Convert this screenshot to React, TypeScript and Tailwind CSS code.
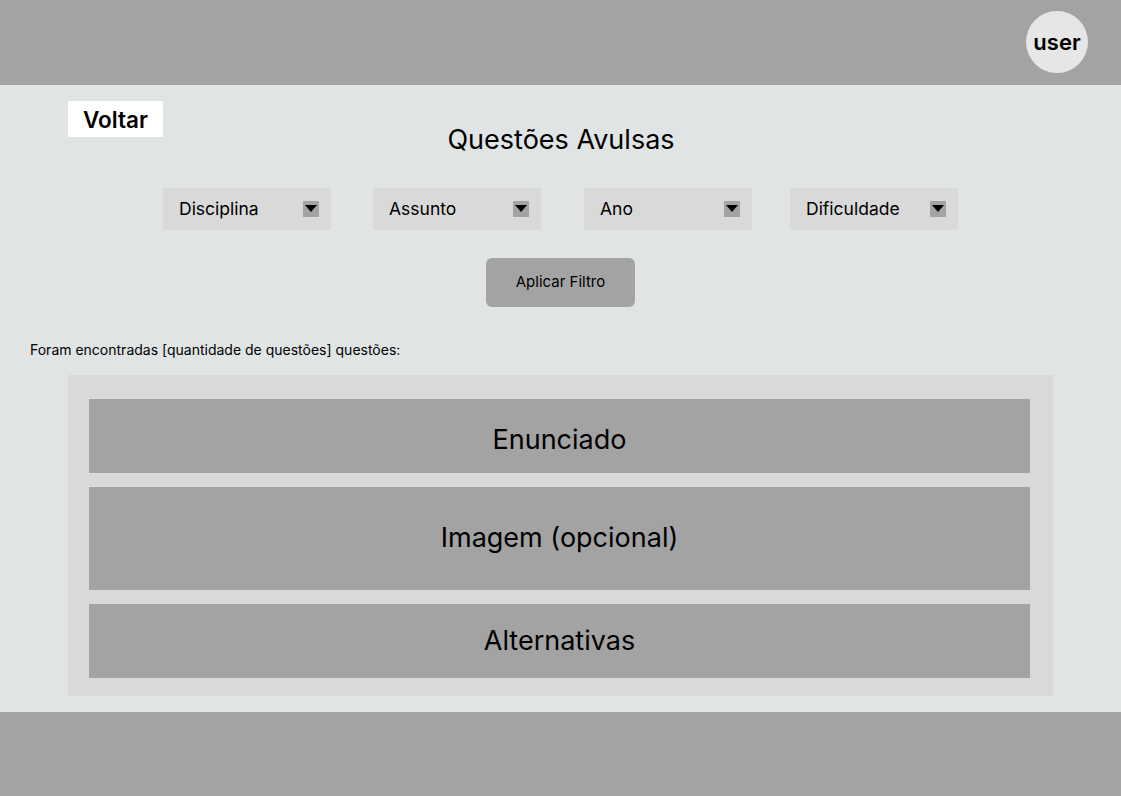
import React from "react";

const font = { fontFamily: "Inter, 'Noto Sans', sans-serif" };

function Select({ label, className = "" }: { label: string; className?: string }) {
  return (
    <div className={`flex h-[42px] w-[168px] items-center justify-between bg-[#d9d9d9] pl-4 pr-[12px] ${className}`}>
      <span className="text-[17.5px] text-black">{label}</span>
      <span className="flex h-4 w-4 items-center justify-center bg-[#a3a3a3]">
        <svg width="12" height="8" viewBox="0 0 12 8">
          <polygon points="0,0 12,0 6,7" fill="#000" />
        </svg>
      </span>
    </div>
  );
}

export default function App() {
  return (
    <div className="flex h-[796px] w-[1121px] flex-col bg-[#e1e4e5]" style={font}>
      <header className="flex h-[85px] shrink-0 items-start justify-end bg-[#a3a3a3] pr-[33px] pt-[11px]">
        <div className="flex h-[62px] w-[62px] items-center justify-center rounded-full bg-[#e6e6e6] text-[22px] font-semibold text-black">
          user
        </div>
      </header>
      <main className="relative flex flex-1 flex-col">
        <div className="ml-[68px] mt-4 flex h-9 w-[95px] items-center justify-center bg-white pt-[2px] text-[22.5px] font-semibold text-black">
          Voltar
        </div>
        <h1 className="-mt-[13px] pl-[1px] text-center text-[27px] leading-[32px] text-black">Questões Avulsas</h1>
        <div className="mt-[32px] flex pl-[163px]">
          <Select label="Disciplina" />
          <Select label="Assunto" className="ml-[42px]" />
          <Select label="Ano" className="ml-[43px]" />
          <Select label="Dificuldade" className="ml-[38px]" />
        </div>
        <div className="mt-[28px] flex justify-center">
          <button className="h-[49px] w-[149px] rounded-md bg-[#a3a3a3] text-[15px] text-black">Aplicar Filtro</button>
        </div>
        <p className="ml-[30px] mt-[35px] text-[14px] leading-4 text-black">
          Foram encontradas [quantidade de questões] questões:
        </p>
        <section className="ml-[68px] mt-[17px] flex w-[985px] flex-col gap-[14px] bg-[#d9d9d9] pb-[18px] pl-[21px] pr-[23px] pt-6">
          <div className="flex h-[74px] items-center justify-center bg-[#a3a3a3] pt-2 text-[27px] text-black">Enunciado</div>
          <div className="flex h-[103px] items-center justify-center bg-[#a3a3a3] text-[27px] text-black">Imagem (opcional)</div>
          <div className="flex h-[74px] items-center justify-center bg-[#a3a3a3] text-[27px] text-black">Alternativas</div>
        </section>
      </main>
      <footer className="h-[84px] shrink-0 bg-[#a3a3a3]" />
    </div>
  );
}
